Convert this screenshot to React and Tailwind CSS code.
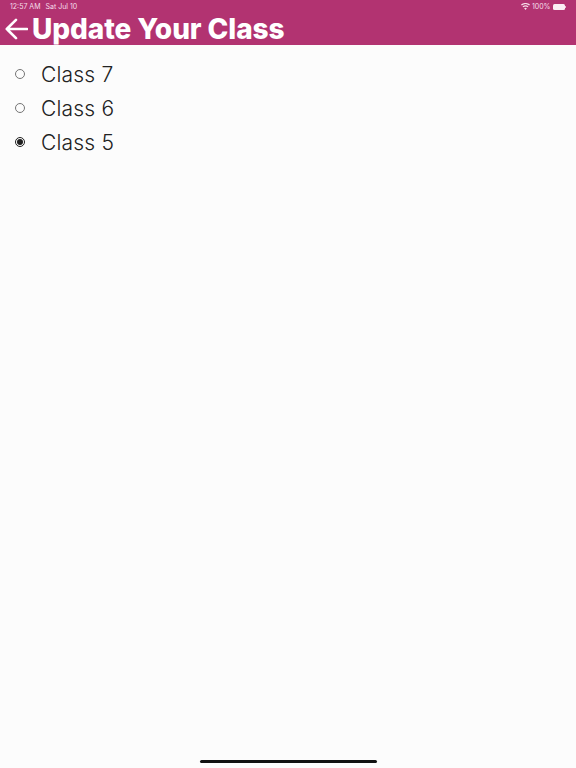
const classes = [
  { label: "Class 7", checked: false },
  { label: "Class 6", checked: false },
  { label: "Class 5", checked: true },
];

function Radio({ checked }) {
  return (
    <span
      className={`flex h-[10px] w-[10px] items-center justify-center rounded-full border ${
        checked ? "border-[#1f1f1f]" : "border-[#757575]"
      }`}
    >
      {checked && <span className="h-[6px] w-[6px] rounded-full bg-[#1f1f1f]" />}
    </span>
  );
}

export default function App() {
  return (
    <div className="flex h-[768px] w-[576px] flex-col overflow-hidden bg-[#fcfcfc] font-['Inter','Liberation_Sans',sans-serif]">
      <header className="h-[45px] bg-[#b23371] text-white">
        <div className="flex h-[13px] items-center justify-between px-[10px] text-[7px] leading-none text-[#f6dfea]">
          <div className="flex gap-[5px]">
            <span>12:57 AM</span>
            <span>Sat Jul 10</span>
          </div>
          <div className="flex items-center gap-[2px]">
            <svg width="9" height="7" viewBox="0 0 18 14" fill="currentColor">
              <path d="M9 14 6.2 10.6a4.4 4.4 0 0 1 5.6 0L9 14ZM4.6 8.7 3 6.8a9.3 9.3 0 0 1 12 0l-1.6 1.9a6.8 6.8 0 0 0-8.8 0ZM1.6 5.1 0 3.2a14 14 0 0 1 18 0l-1.6 1.9a11.6 11.6 0 0 0-14.8 0Z" />
            </svg>
            <span>100%</span>
            <span className="flex items-center">
              <span className="h-[6px] w-[12px] rounded-[1.5px] bg-[#fbeef4]" />
              <span className="ml-[0.5px] h-[2px] w-[1px] bg-[#e7b9cf]" />
            </span>
          </div>
        </div>
        <div className="flex h-[32px] items-center pl-[5px]">
          <svg width="23" height="22" viewBox="0 0 23 22" fill="none" stroke="currentColor" strokeWidth="2.6" strokeLinecap="round" strokeLinejoin="round" className="shrink-0">
            <path d="M22 11H1.8M11 1.8 1.8 11l9.2 9.2" />
          </svg>
          <h1 className="ml-[4px] text-[28px] leading-none font-extrabold tracking-[-0.08px] whitespace-nowrap">Update Your Class</h1>
        </div>
      </header>
      <main className="flex flex-1 flex-col pt-[12px]">
        {classes.map((c) => (
          <label key={c.label} className="flex h-[34px] items-center pl-[15px]">
            <Radio checked={c.checked} />
            <span className="ml-[16px] text-[21px] leading-none font-light tracking-[0.2px] text-[#222222]">{c.label}</span>
          </label>
        ))}
      </main>
      <footer className="flex h-[8px] justify-center">
        <div className="h-[3px] w-[177px] rounded-full bg-[#111111]" />
      </footer>
    </div>
  );
}
